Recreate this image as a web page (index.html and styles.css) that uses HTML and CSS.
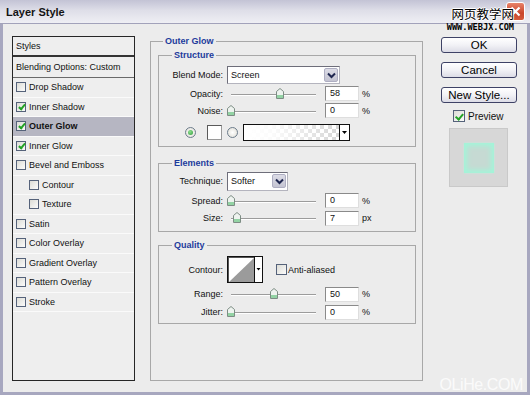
FILE: index.html
```html
<!DOCTYPE html>
<html>
  <head>
    <title>Layer Style</title>
    <link rel="stylesheet" href="styles.css">
  </head>
  <body>
    <div class="window">
      <div class="titlebar">
        <span class="title">Layer Style</span>
        <span class="close">
          <svg width="11" height="11" viewBox="0 0 11 11"><path d="M1.5 1.5 L9.5 9.5 M9.5 1.5 L1.5 9.5" stroke="#fff" stroke-width="2.2" fill="none"/></svg>
        </span>
        <div class="stamp">
          <span class="stamp-cn">网页教学网</span>
          <span class="stamp-url">WWW.WEBJX.COM</span>
        </div>
      </div>

      <div class="frame">
        <ul class="styles">
          <li class="head first">Styles</li>
          <li class="head blend">Blending Options: Custom</li>
          <li><span class="cb"></span>Drop Shadow</li>
          <li><span class="cb on"></span>Inner Shadow</li>
          <li class="sel"><span class="cb on"></span>Outer Glow</li>
          <li><span class="cb on"></span>Inner Glow</li>
          <li><span class="cb"></span>Bevel and Emboss</li>
          <li class="sub"><span class="cb"></span>Contour</li>
          <li class="sub"><span class="cb"></span>Texture</li>
          <li><span class="cb"></span>Satin</li>
          <li><span class="cb"></span>Color Overlay</li>
          <li><span class="cb"></span>Gradient Overlay</li>
          <li><span class="cb"></span>Pattern Overlay</li>
          <li><span class="cb"></span>Stroke</li>
        </ul>

        <fieldset class="panel">
          <legend>Outer Glow</legend>

          <fieldset class="group structure">
            <legend>Structure</legend>
            <div class="row row-select">
              <span class="lbl">Blend Mode:</span>
              <div class="select blend-mode">
                <span>Screen</span>
                <span class="drop">
                  <svg width="9" height="7" viewBox="0 0 9 7"><path d="M1 1.5 L4.5 5 L8 1.5" stroke="#1f2750" stroke-width="2" fill="none"/></svg>
                </span>
              </div>
            </div>
            <div class="row">
              <span class="lbl">Opacity:</span>
              <div class="slider"><div class="track"><span class="thumb" style="left: 58%"><svg width="8" height="11" viewBox="0 0 8 11"><path d="M0.5 3.5 L4 0.5 L7.5 3.5 V10.5 H0.5 Z" fill="#eef3ef" stroke="#7d8d84"/><path d="M1 7 H7 V10 H1 Z" fill="#93d3a4"/></svg></span></div></div>
              <span class="num">58</span><span class="unit">%</span>
            </div>
            <div class="row">
              <span class="lbl">Noise:</span>
              <div class="slider"><div class="track"><span class="thumb" style="left: 0%"><svg width="8" height="11" viewBox="0 0 8 11"><path d="M0.5 3.5 L4 0.5 L7.5 3.5 V10.5 H0.5 Z" fill="#eef3ef" stroke="#7d8d84"/><path d="M1 7 H7 V10 H1 Z" fill="#93d3a4"/></svg></span></div></div>
              <span class="num">0</span><span class="unit">%</span>
            </div>
            <div class="row colors">
              <span class="radio on"></span>
              <span class="swatch"></span>
              <span class="radio second"></span>
              <div class="gradient">
                <span class="grad-fill"></span>
                <span class="grad-arrow"><svg width="5" height="3" viewBox="0 0 5 3"><path d="M0 0 H5 L2.5 3 Z" fill="#000"/></svg></span>
              </div>
            </div>
          </fieldset>

          <fieldset class="group elements">
            <legend>Elements</legend>
            <div class="row row-select">
              <span class="lbl">Technique:</span>
              <div class="select technique">
                <span>Softer</span>
                <span class="drop">
                  <svg width="9" height="7" viewBox="0 0 9 7"><path d="M1 1.5 L4.5 5 L8 1.5" stroke="#1f2750" stroke-width="2" fill="none"/></svg>
                </span>
              </div>
            </div>
            <div class="row">
              <span class="lbl">Spread:</span>
              <div class="slider"><div class="track"><span class="thumb" style="left: 0%"><svg width="8" height="11" viewBox="0 0 8 11"><path d="M0.5 3.5 L4 0.5 L7.5 3.5 V10.5 H0.5 Z" fill="#eef3ef" stroke="#7d8d84"/><path d="M1 7 H7 V10 H1 Z" fill="#93d3a4"/></svg></span></div></div>
              <span class="num">0</span><span class="unit">%</span>
            </div>
            <div class="row row-size">
              <span class="lbl">Size:</span>
              <div class="slider"><div class="track"><span class="thumb" style="left: 7%"><svg width="8" height="11" viewBox="0 0 8 11"><path d="M0.5 3.5 L4 0.5 L7.5 3.5 V10.5 H0.5 Z" fill="#eef3ef" stroke="#7d8d84"/><path d="M1 7 H7 V10 H1 Z" fill="#93d3a4"/></svg></span></div></div>
              <span class="num">7</span><span class="unit">px</span>
            </div>
          </fieldset>

          <fieldset class="group quality">
            <legend>Quality</legend>
            <div class="row row-contour">
              <span class="lbl">Contour:</span>
              <svg class="contour" width="36" height="27" viewBox="0 0 36 27">
                <rect x="0.5" y="0.5" width="35" height="26" fill="#fff" stroke="#111"/>
                <path d="M1 1.5 H27 M1.5 1 V26" stroke="#555" stroke-width="1"/>
                <path d="M2 26 L27 2 V26 Z" fill="#9b9b9b"/>
                <path d="M27.5 1 V26" stroke="#111"/>
                <path d="M29.5 12 H33.5 L31.5 14.5 Z" fill="#000"/>
              </svg>
              <span class="cb aa"></span><span class="aa-text">Anti-aliased</span>
            </div>
            <div class="row row-q">
              <span class="lbl">Range:</span>
              <div class="slider"><div class="track"><span class="thumb" style="left: 50%"><svg width="8" height="11" viewBox="0 0 8 11"><path d="M0.5 3.5 L4 0.5 L7.5 3.5 V10.5 H0.5 Z" fill="#eef3ef" stroke="#7d8d84"/><path d="M1 7 H7 V10 H1 Z" fill="#93d3a4"/></svg></span></div></div>
              <span class="num">50</span><span class="unit">%</span>
            </div>
            <div class="row row-q">
              <span class="lbl">Jitter:</span>
              <div class="slider"><div class="track"><span class="thumb" style="left: 0%"><svg width="8" height="11" viewBox="0 0 8 11"><path d="M0.5 3.5 L4 0.5 L7.5 3.5 V10.5 H0.5 Z" fill="#eef3ef" stroke="#7d8d84"/><path d="M1 7 H7 V10 H1 Z" fill="#93d3a4"/></svg></span></div></div>
              <span class="num">0</span><span class="unit">%</span>
            </div>
          </fieldset>
        </fieldset>

        <div class="side">
          <button type="button">OK</button>
          <button type="button">Cancel</button>
          <button type="button">New Style...</button>
          <div class="preview-check"><span class="cb on big"></span>Preview</div>
          <div class="preview"><div class="glow"></div></div>
        </div>

        <span class="mark">OLiHe.COM</span>
      </div>
    </div>
  </body>
</html>
```

FILE: styles.css
```css
body {
  margin: 0;
  font-family: "Liberation Sans", Arial, sans-serif;
  font-size: 9px;
  color: #111;
  background: #ececec;
}

.window {
  width: 530px;
  height: 395px;
  display: flex;
  flex-direction: column;
  overflow: hidden;
}

/* title bar */
.titlebar {
  position: relative;
  flex: none;
  height: 24px;
  box-sizing: border-box;
  display: flex;
  align-items: center;
  justify-content: space-between;
  padding: 0 5px 0 6px;
  background: linear-gradient(#c3c3d5, #dedee8 45%, #efeff4);
  border-bottom: 1px solid #a2a2ba;
}

.title {
  font-size: 11px;
  font-weight: bold;
  color: #141414;
}

.close {
  width: 19px;
  height: 19px;
  box-sizing: border-box;
  display: flex;
  align-items: center;
  justify-content: center;
  border: 1px solid #fff;
  border-radius: 3px;
  background: linear-gradient(#e8836a, #c9452a 60%, #d45a3c);
}

.stamp {
  position: absolute;
  right: 16px;
  top: 6px;
  display: flex;
  flex-direction: column;
  align-items: flex-end;
}

.stamp-cn {
  font-family: "Noto Sans CJK SC", sans-serif;
  font-size: 12.5px;
  line-height: 15px;
  color: #000;
  text-shadow: 1px 0 #fff, -1px 0 #fff, 0 1px #fff, 0 -1px #fff;
}

.stamp-url {
  margin-top: 2px;
  font-family: "DejaVu Sans Mono", monospace;
  font-weight: bold;
  font-size: 8.6px;
  line-height: 9px;
  color: #000;
}

/* dialog body */
.frame {
  position: relative;
  flex: 1;
  display: flex;
  align-items: stretch;
  padding: 12px 10px 11px 9px;
  border: 3px solid #a7a7bf;
  border-top: 0;
}

/* styles list */
.styles {
  list-style: none;
  margin: 0;
  padding: 0;
  width: 123px;
  box-sizing: border-box;
  border: 1px solid #262626;
  background: #eeeeee;
}

.styles li {
  height: 19.5px;
  box-sizing: border-box;
  display: flex;
  align-items: center;
  padding-left: 3px;
  border-bottom: 1px solid #fafafa;
}

.styles .first {
  height: 20px;
  border-bottom: 2px solid #333;
}

.styles .blend {
  height: 21px;
  border-bottom: 1px solid #6a6a6a;
}

.styles .sub {
  padding-left: 16px;
}

.styles .sel {
  background: #b6b6c2;
  font-weight: bold;
}

.cb {
  position: relative;
  flex: none;
  width: 10px;
  height: 10px;
  box-sizing: border-box;
  margin-right: 3px;
  border: 1px solid #55627a;
  background: linear-gradient(135deg, #dcdcd6, #fbfbfb);
}

.cb.on::after {
  content: "";
  position: absolute;
  left: 2.5px;
  top: 0;
  width: 2px;
  height: 5px;
  border: solid #22a325;
  border-width: 0 2px 2px 0;
  transform: rotate(40deg);
}

/* outer glow panel */
fieldset {
  margin: 0;
  min-width: 0;
  border: 1px solid #a8a8a8;
}

legend {
  padding: 0 2px;
  font-weight: bold;
  line-height: 12px;
  color: #1d3b9c;
}

.panel {
  width: 273px;
  box-sizing: border-box;
  margin: -1px 0 0 15px;
  padding: 2px 6px 0 7px;
}

.panel > legend {
  margin-left: 5px;
}

.group > legend {
  margin-left: 13px;
}

.structure {
  padding: 4px 0 5px;
}

.elements {
  margin-top: 10px;
  padding: 1px 0 4px;
}

.quality {
  margin-top: 7px;
  padding: 3px 0 2px;
}

.row {
  display: flex;
  align-items: center;
  height: 17px;
}

.row-select {
  height: 20px;
}

.elements .row-select {
  height: 22px;
}

.row-size {
  height: 18px;
}

.row-contour {
  height: 31px;
}

.row-q {
  height: 18px;
}

.lbl {
  flex: none;
  width: 64px;
  margin-right: 4px;
  text-align: right;
}

.select {
  display: flex;
  align-items: center;
  height: 18px;
  box-sizing: border-box;
  padding-left: 3px;
  background: #fff;
  border: 1px solid;
  border-color: #6e6e7a #b4b4be #b4b4be #6e6e7a;
}

.blend-mode {
  width: 113px;
}

.technique {
  width: 61px;
  height: 19px;
}

.drop {
  display: flex;
  align-items: center;
  justify-content: center;
  width: 14px;
  height: 14px;
  box-sizing: border-box;
  margin-left: auto;
  margin-right: 1px;
  background: linear-gradient(#dcdce6, #c4c4d2);
  border: 1px solid #aeaec2;
  border-radius: 2px;
}

.slider {
  flex: none;
  width: 92px;
  height: 100%;
  box-sizing: border-box;
  padding: 0 3px 0 4px;
}

.track {
  position: relative;
  height: 100%;
}

.track::before {
  content: "";
  position: absolute;
  left: 0;
  right: 0;
  top: 50%;
  border-top: 1px solid #9c9c9c;
  border-bottom: 1px solid #fff;
}

.thumb {
  position: absolute;
  top: calc(50% - 6px);
  width: 8px;
  height: 11px;
  margin-left: -4px;
}

.thumb svg {
  display: block;
}

.num {
  flex: none;
  width: 34px;
  height: 15px;
  box-sizing: border-box;
  margin-left: 6px;
  padding-left: 4px;
  line-height: 13px;
  background: #fff;
  border: 1px solid;
  border-color: #8a8a8a #dedede #dedede #8a8a8a;
}

.unit {
  margin-left: 3px;
}

.colors {
  margin-top: 5px;
  padding-left: 26px;
}

.radio {
  flex: none;
  display: flex;
  align-items: center;
  justify-content: center;
  width: 11px;
  height: 11px;
  box-sizing: border-box;
  border: 1px solid #6d7d8c;
  border-radius: 50%;
  background: radial-gradient(#ffffff, #dedcd4);
}

.radio.on::after {
  content: "";
  width: 5px;
  height: 5px;
  border-radius: 50%;
  background: radial-gradient(circle at 40% 35%, #8fe08f, #2f9a3c);
}

.radio.second {
  margin-left: 5px;
}

.swatch {
  flex: none;
  width: 15px;
  height: 15px;
  box-sizing: border-box;
  margin-left: 11px;
  background: #fff;
  border: 1px solid;
  border-color: #5a5a5a #9a9a9a #9a9a9a #5a5a5a;
}

.gradient {
  display: flex;
  width: 107px;
  height: 17px;
  box-sizing: border-box;
  margin-left: 5px;
  border: 1px solid #111;
}

.grad-fill {
  flex: 1;
  background:
    linear-gradient(to right, #fff 0%, rgba(255, 255, 255, 0.9) 30%, rgba(255, 255, 255, 0) 100%),
    repeating-conic-gradient(#d6d6d6 0 25%, #fff 0 50%) 0 0 / 8px 8px;
}

.grad-arrow {
  display: flex;
  align-items: center;
  justify-content: center;
  width: 9px;
  background: #fff;
  border-left: 1px solid #111;
}

.contour {
  flex: none;
  display: block;
}

.cb.aa {
  width: 11px;
  height: 11px;
  margin: 0 1px 0 13px;
}

/* buttons and preview */
.side {
  align-self: flex-start;
  display: flex;
  flex-direction: column;
  width: 76px;
  margin: 1px 0 0 18px;
}

.side button {
  height: 16px;
  margin: 0 0 9px;
  padding: 0;
  font-family: "Liberation Sans", Arial, sans-serif;
  font-size: 11.5px;
  line-height: 14px;
  color: #000;
  background: linear-gradient(#ffffff, #f2f2f6 50%, #dcdce6);
  border: 1px solid #3e4266;
  border-radius: 3px;
}

.side button:last-of-type {
  margin-bottom: 6px;
}

.preview-check {
  display: flex;
  align-items: center;
  height: 14px;
  padding-left: 12px;
  font-size: 10px;
}

.cb.big {
  width: 12px;
  height: 12px;
  margin-right: 3px;
}

.cb.big::after {
  left: 3px;
  top: 0.5px;
  width: 2.5px;
  height: 6px;
}

.preview {
  display: flex;
  align-items: center;
  justify-content: center;
  width: 59px;
  height: 59px;
  box-sizing: border-box;
  margin: 5px 0 0 8px;
  background: #d7d7d7;
  border: 1px solid #c9c9c9;
}

.glow {
  width: 30px;
  height: 30px;
  background: #c6dad3;
  box-shadow: inset 0 0 5px 3px #a3f5d9, 0 0 2px #bdeedd;
}

.mark {
  position: absolute;
  right: 4px;
  bottom: -2px;
  font-size: 16px;
  line-height: 18px;
  letter-spacing: -0.4px;
  color: rgba(255, 255, 255, 0.8);
}
```
